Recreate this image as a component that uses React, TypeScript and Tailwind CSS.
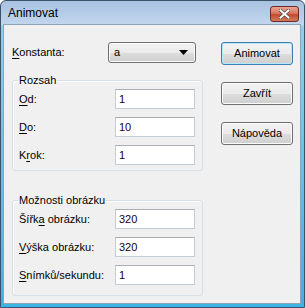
import { type ReactNode } from "react";

const font = { fontFamily: '"Liberation Sans", Arial, sans-serif' };

function Mn({ children }: { children: ReactNode }) {
  return <span className="underline underline-offset-[2px]">{children}</span>;
}

function Field({ label, value }: { label: ReactNode; value: string }) {
  return (
    <div className="flex items-center h-[20px] pl-[6px] pr-[7px]">
      <div className="flex-1 text-[11px] text-black">{label}</div>
      <div className="w-[80px] h-[20px] bg-white border border-[#c5ccd6] border-t-[#abadb3] px-[3px] text-[11px] leading-[18px] text-[#200020]">
        {value}
      </div>
    </div>
  );
}

function Group({ title, children, bottom }: { title: string; children: ReactNode; bottom: string }) {
  return (
    <fieldset className={`border border-[#d5dfe5] rounded-[3px] shadow-[inset_1px_1px_0_#ffffff] p-0 ${bottom}`}>
      <legend className="ml-[5px] px-[1px] text-[11px] leading-[13px] text-black">{title}</legend>
      <div className="flex flex-col gap-[8px] pt-[2px]">{children}</div>
    </fieldset>
  );
}

function Button({ label, primary }: { label: string; primary?: boolean }) {
  return (
    <div
      className={`w-[72px] h-[23px] rounded-[3px] border flex items-center justify-center text-[11px] text-black bg-[linear-gradient(to_bottom,#f2f2f2_0%,#ebebeb_50%,#dddddd_51%,#cfcfcf_100%)] ${
        primary
          ? "border-[#3c7fb1] shadow-[inset_0_0_0_1px_#b6e6fb]"
          : "border-[#707070] shadow-[inset_0_0_0_1px_#fbfbfb]"
      }`}
    >
      {label}
    </div>
  );
}

export default function App() {
  return (
    <div
      style={font}
      className="w-[305px] h-[308px] flex flex-col border border-[#3d5269] rounded-t-[6px] overflow-hidden bg-[linear-gradient(to_bottom,#a8c2e0_0px,#c3d7ed_24px,#8fd0ec_25px,#3ab4e2_308px)]"
    >
      <div className="h-[23px] flex items-center justify-between pl-[7px] pr-[5px]">
        <span className="text-[12px] text-black pt-[1px]">Animovat</span>
        <div className="w-[29px] h-[16px] mt-[2px] rounded-[3px] border border-[#6b2a25] bg-[linear-gradient(to_bottom,#e8a493_0%,#d9775f_45%,#c44a2f_55%,#d47a58_100%)] flex items-center justify-center">
          <svg width="11" height="10" viewBox="0 0 11 10">
            <path d="M1.5 1.5 L9.5 8.5 M9.5 1.5 L1.5 8.5" stroke="#4a4a4a" strokeWidth="3.4" strokeLinecap="square" />
            <path d="M1.5 1.5 L9.5 8.5 M9.5 1.5 L1.5 8.5" stroke="#ffffff" strokeWidth="2" strokeLinecap="square" />
          </svg>
        </div>
      </div>
      <div className="ml-[2px] w-[298px] flex-1 mb-[3px] border border-[#8ea3ba] bg-[#f0f0f0] flex pl-[8px] pt-[17px]">
        <div className="w-[191px] flex flex-col">
          <div className="flex items-center h-[21px]">
            <div className="w-[96px] text-[11px] text-black">
              <Mn>K</Mn>onstanta:
            </div>
            <div className="w-[88px] h-[21px] rounded-[3px] border border-[#707070] bg-[linear-gradient(to_bottom,#f2f2f2_0%,#ebebeb_50%,#dddddd_51%,#cfcfcf_100%)] shadow-[inset_0_0_0_1px_#fbfbfb] flex items-center justify-between pl-[5px] pr-[7px] text-[11px] text-black">
              <span>a</span>
              <svg width="9" height="5" viewBox="0 0 9 5">
                <path d="M0 0 H9 L4.5 5 Z" fill="#000000" />
              </svg>
            </div>
          </div>
          <div className="mt-[11px]">
            <Group title="Rozsah" bottom="pb-[5px]">
              <Field label={<><Mn>O</Mn>d:</>} value="1" />
              <Field label={<><Mn>D</Mn>o:</>} value="10" />
              <Field label={<>K<Mn>r</Mn>ok:</>} value="1" />
            </Group>
          </div>
          <div className="mt-[23px]">
            <Group title="Možnosti obrázku" bottom="pb-[10px]">
              <Field label={<>Šířk<Mn>a</Mn> obrázku:</>} value="320" />
              <Field label={<><Mn>V</Mn>ýška obrázku:</>} value="320" />
              <Field label={<><Mn>S</Mn>nímků/sekundu:</>} value="1" />
            </Group>
          </div>
        </div>
        <div className="ml-[18px] flex flex-col gap-[17px]">
          <Button label="Animovat" primary />
          <Button label="Zavřít" />
          <Button label="Nápověda" />
        </div>
      </div>
    </div>
  );
}
